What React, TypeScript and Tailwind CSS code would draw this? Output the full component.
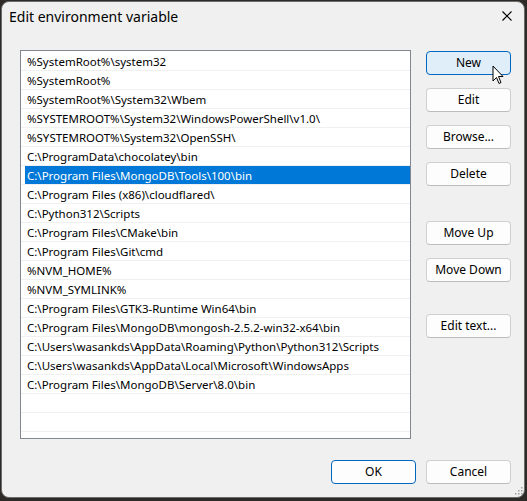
import React from "react";

// Path entries shown in the list
const entries = [
  "%SystemRoot%\\system32",
  "%SystemRoot%",
  "%SystemRoot%\\System32\\Wbem",
  "%SYSTEMROOT%\\System32\\WindowsPowerShell\\v1.0\\",
  "%SYSTEMROOT%\\System32\\OpenSSH\\",
  "C:\\ProgramData\\chocolatey\\bin",
  "C:\\Program Files\\MongoDB\\Tools\\100\\bin",
  "C:\\Program Files (x86)\\cloudflared\\",
  "C:\\Python312\\Scripts",
  "C:\\Program Files\\CMake\\bin",
  "C:\\Program Files\\Git\\cmd",
  "%NVM_HOME%",
  "%NVM_SYMLINK%",
  "C:\\Program Files\\GTK3-Runtime Win64\\bin",
  "C:\\Program Files\\MongoDB\\mongosh-2.5.2-win32-x64\\bin",
  "C:\\Users\\wasankds\\AppData\\Roaming\\Python\\Python312\\Scripts",
  "C:\\Users\\wasankds\\AppData\\Local\\Microsoft\\WindowsApps",
  "C:\\Program Files\\MongoDB\\Server\\8.0\\bin",
];

const SELECTED = 6;

function WinButton({ label, variant = "normal", className = "" }: { label: string; variant?: "normal" | "hover" | "default"; className?: string }) {
  const styles =
    variant === "hover"
      ? "bg-[#e0eef9] border-[#0067c0]"
      : variant === "default"
      ? "bg-[#fdfdfd] border-[#0067c0]"
      : "bg-[#fdfdfd] border-[#d0d0d0] border-b-[#bdbdbd]";
  return (
    <button
      className={`w-[85px] h-[24px] rounded-[4px] border text-[12px] text-black flex items-center justify-center ${styles} ${className}`}
    >
      {label}
    </button>
  );
}

export default function App() {
  return (
    <div
      className="relative w-[527px] h-[501px] bg-[#2e2a27] pt-[1px] pl-[1px] pr-[2px] pb-[3px]"
      style={{ fontFamily: '"Noto Sans", "Open Sans", sans-serif' }}
    >
      <div className="w-full h-full bg-[#f0f0f0] rounded-[8px] border border-[#6b6b6b] flex flex-col overflow-hidden">
        {/* Title bar */}
        <div className="h-[28px] flex items-center justify-between pl-[7px] pr-[12px] shrink-0">
          <span className="text-[14px] text-black">Edit environment variable</span>
          <svg width="10" height="10" viewBox="0 0 10 10" className="text-black">
            <path d="M0.5 0.5 L9.5 9.5 M9.5 0.5 L0.5 9.5" stroke="currentColor" strokeWidth="1.1" />
          </svg>
        </div>

        {/* List + side buttons */}
        <div className="flex mt-[20px] pl-[18px] gap-[15px]">
          <div className="w-[391px] h-[389px] bg-white border border-[#828790] pt-[1px] overflow-hidden">
            {entries.map((e, i) => (
              <div key={i} className="h-[19px] border-b border-[#f0f0f0] flex">
                {i === SELECTED ? (
                  <div className="ml-[4px] flex-1 h-full bg-[#0078d7] text-white text-[11.5px] leading-[18px] pt-[1px] pl-[2px] whitespace-nowrap">
                    {e}
                  </div>
                ) : (
                  <div className="ml-[4px] flex-1 text-black text-[11.5px] leading-[18px] pt-[1px] pl-[2px] whitespace-nowrap">
                    {e}
                  </div>
                )}
              </div>
            ))}
            {Array.from({ length: 4 }).map((_, i) => (
              <div key={"empty" + i} className="h-[19px] border-b border-[#f0f0f0]" />
            ))}
          </div>

          <div className="flex flex-col mt-[1px]">
            <WinButton label="New" variant="hover" />
            <WinButton label="Edit" className="mt-[13px]" />
            <WinButton label="Browse..." className="mt-[13px]" />
            <WinButton label="Delete" className="mt-[13px]" />
            <WinButton label="Move Up" className="mt-[35px]" />
            <WinButton label="Move Down" className="mt-[13px]" />
            <WinButton label="Edit text..." className="mt-[32px]" />
          </div>
        </div>

        {/* Footer */}
        <div className="flex justify-end gap-[10px] mt-[21px] pr-[13px]">
          <WinButton label="OK" variant="default" />
          <WinButton label="Cancel" />
        </div>
      </div>

      {/* Resize grip */}
      <svg width="10" height="10" viewBox="0 0 10 10" className="absolute left-[513px] top-[487px]">
        <g fill="#a0a0a0">
          <rect x="8" y="0" width="1.5" height="1.5" />
          <rect x="5" y="3" width="1.5" height="1.5" />
          <rect x="8" y="3" width="1.5" height="1.5" />
          <rect x="2" y="6" width="1.5" height="1.5" />
          <rect x="5" y="6" width="1.5" height="1.5" />
          <rect x="8" y="6" width="1.5" height="1.5" />
        </g>
      </svg>

      {/* Mouse cursor */}
      <svg width="13" height="21" viewBox="0 0 13 21" className="absolute left-[492px] top-[65px]">
        <path
          d="M1 1 L1 16 L4.5 12.5 L7 18.5 L9 17.5 L6.5 11.5 L11 11.5 Z"
          fill="white"
          stroke="black"
          strokeWidth="1"
          strokeLinejoin="round"
        />
      </svg>
    </div>
  );
}
